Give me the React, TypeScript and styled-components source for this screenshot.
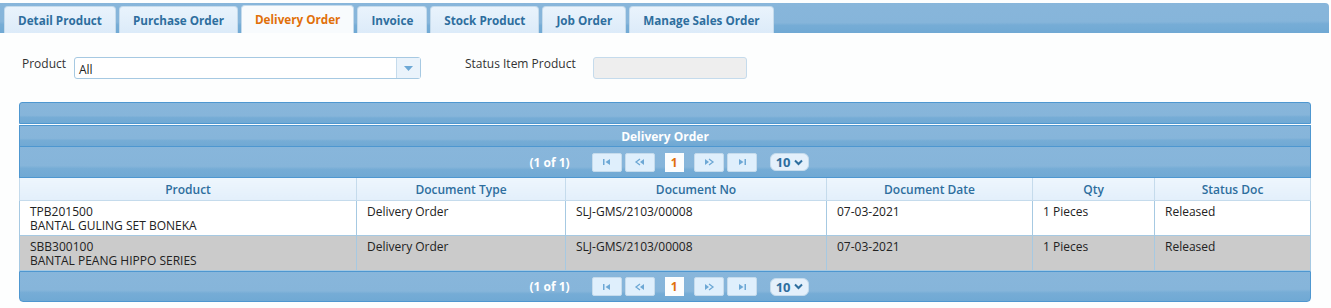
import React from 'react'
import styled, { createGlobalStyle, css } from 'styled-components'

const GlobalStyle = createGlobalStyle`
  body {
    margin: 0;
    background: #fdfefe;
    font-family: 'Open Sans', 'Liberation Sans', sans-serif;
    font-size: 12px;
    color: #333;
  }
`

const wave = css`
  background:
    radial-gradient(140% 75% at 45% 0%, #88b6db 0, #86b5da 88%, rgba(134, 181, 218, 0) 100%),
    linear-gradient(to bottom, #86b5da 0, #70a9d4 100%);
`

const Page = styled.div`
  display: flex;
  flex-direction: column;
  width: 1331px;
`

const TabBar = styled.div`
  ${wave};
  display: flex;
  align-items: flex-end;
  gap: 3px;
  height: 30px;
  margin: 3px 2px 0 0;
  padding: 0 0 0 4px;
  border-radius: 0 4px 0 0;
  box-sizing: border-box;
`

const Tab = styled.div<{ active?: boolean }>`
  height: 27px;
  padding: 0 13px;
  display: flex;
  align-items: center;
  box-sizing: border-box;
  border-radius: 4px 4px 0 0;
  border: 1px solid #c5dbec;
  border-bottom: none;
  font-weight: 700;
  font-size: 11.7px;
  color: ${(p) => (p.active ? '#e17009' : '#2e6e9e')};
  background: ${(p) =>
    p.active ? '#f8fbfd' : 'linear-gradient(to bottom, #e9f3fc 0, #dcebf9 100%)'};
  ${(p) => p.active && 'height: 28px; padding: 0 13px 1px;'}
`

const FilterRow = styled.div`
  display: flex;
  align-items: flex-start;
  padding: 24px 0 0 22px;
  height: 69px;
  box-sizing: border-box;
`

const Label = styled.span<{ width: number }>`
  width: ${(p) => p.width}px;
  line-height: 13px;
  color: #333;
`

const Select = styled.div`
  width: 347px;
  height: 22px;
  box-sizing: border-box;
  border: 1px solid #a6c9e2;
  border-radius: 3px;
  background: #fff;
  display: flex;
  align-items: stretch;
  margin-right: 44px;
`

const SelectText = styled.span`
  flex: 1;
  padding: 3px 4px 0;
  color: #222;
`

const SelectArrow = styled.span`
  width: 23px;
  border-left: 1px solid #c5dbec;
  background: #eaf3fb;
  display: flex;
  align-items: center;
  justify-content: center;
`

const ReadOnlyInput = styled.div`
  width: 154px;
  height: 22px;
  box-sizing: border-box;
  border: 1px solid #c5dbec;
  border-radius: 3px;
  background: #eeeeee;
`

const Panel = styled.div`
  margin: 0 20px 0 19px;
  display: flex;
  flex-direction: column;
`

const HeaderBar = styled.div<{ h: number; top?: boolean; bottom?: boolean; ruled?: boolean }>`
  ${wave};
  height: ${(p) => p.h}px;
  box-sizing: border-box;
  border: 1px solid #4e97d0;
  border-top-width: ${(p) => (p.top || p.bottom || p.ruled ? 1 : 0)}px;
  border-radius: ${(p) => (p.top ? '3px 3px 0 0' : p.bottom ? '0 0 4px 4px' : '0')};
  display: flex;
  align-items: center;
  justify-content: center;
  color: #fff;
  font-weight: 700;
  ${(p) => p.top && 'margin-bottom: 1px;'}
`

const Paginator = styled.div`
  display: flex;
  align-items: center;
  gap: 3px;
  padding-left: 8px;
`

const PageReport = styled.span`
  color: #fff;
  font-weight: 700;
  margin-right: 19px;
`

const PageButton = styled.span`
  width: 30px;
  height: 19px;
  box-sizing: border-box;
  border: 1px solid #c5dbec;
  border-radius: 2px;
  background: #dfeffc;
  display: flex;
  align-items: center;
  justify-content: center;
`

const PageNumber = styled.span`
  width: 19px;
  height: 19px;
  box-sizing: border-box;
  background: #fbfdfe;
  color: #e17009;
  font-weight: 700;
  display: flex;
  align-items: center;
  justify-content: center;
  margin: 0 7px;
`

const RowsSelect = styled.span`
  margin-left: 10px;
  width: 39px;
  height: 18px;
  box-sizing: border-box;
  border: 1px solid #c5dbec;
  border-radius: 6px;
  background: #e4f0fb;
  color: #2e6e9e;
  font-weight: 700;
  font-size: 13px;
  display: flex;
  align-items: center;
  justify-content: center;
  gap: 3px;
`

const Table = styled.table`
  width: 100%;
  border-collapse: collapse;
  table-layout: fixed;
`

const Col = styled.col<{ w?: number }>`
  width: ${(p) => (p.w ? `${p.w}px` : 'auto')};
`

const Th = styled.th`
  height: 22px;
  padding: 0;
  background: linear-gradient(to bottom, #eef6fd 0, #e3effb 100%);
  border: 1px solid #c5dbec;
  border-top: none;
  color: #2e6e9e;
  font-weight: 600;
  font-size: 12px;
  text-align: center;
`

const Tr = styled.tr<{ shaded?: boolean }>`
  background: ${(p) => (p.shaded ? '#cbcbcb' : '#fff')};
`

const Td = styled.td`
  height: 35px;
  box-sizing: border-box;
  padding: 4px 10px 0;
  vertical-align: top;
  border: 1px solid #a6c9e2;
  border-top-color: #c5dbec;
  color: #222;
  line-height: 14px;
  font-size: 12px;
`

const CellLine = styled.div`
  height: 14px;
  line-height: 14px;
`

const ArrowIcon = ({ dir }: { dir: 'first' | 'prev' | 'next' | 'last' }) => {
  const c = '#6da8d5'
  const paths: Record<string, React.ReactNode> = {
    first: (
      <>
        <rect x="2" y="2" width="1.5" height="6" fill={c} />
        <path d="M9 2 L4.5 5 L9 8 Z" fill={c} />
      </>
    ),
    prev: (
      <>
        <path d="M6 2 L2 5 L6 8" stroke={c} strokeWidth="1.3" fill="none" />
        <path d="M10 2 L6 5 L10 8 Z" fill={c} />
      </>
    ),
    next: (
      <>
        <path d="M2 2 L6 5 L2 8 Z" fill={c} />
        <path d="M6 2 L10 5 L6 8" stroke={c} strokeWidth="1.3" fill="none" />
      </>
    ),
    last: (
      <>
        <path d="M3 2 L7.5 5 L3 8 Z" fill={c} />
        <rect x="8.5" y="2" width="1.5" height="6" fill={c} />
      </>
    ),
  }
  return (
    <svg width="12" height="10" viewBox="0 0 12 10">
      {paths[dir]}
    </svg>
  )
}

const PagerBar = ({ bottom }: { bottom?: boolean }) => (
  <HeaderBar h={31} bottom={bottom}>
    <Paginator>
      <PageReport>(1 of 1)</PageReport>
      <PageButton>
        <ArrowIcon dir="first" />
      </PageButton>
      <PageButton>
        <ArrowIcon dir="prev" />
      </PageButton>
      <PageNumber>1</PageNumber>
      <PageButton>
        <ArrowIcon dir="next" />
      </PageButton>
      <PageButton>
        <ArrowIcon dir="last" />
      </PageButton>
      <RowsSelect>
        10
        <svg width="9" height="7" viewBox="0 0 9 7">
          <path d="M1 1.5 L4.5 5 L8 1.5" stroke="#2e6e9e" strokeWidth="2" fill="none" />
        </svg>
      </RowsSelect>
    </Paginator>
  </HeaderBar>
)

const tabs = [
  'Detail Product',
  'Purchase Order',
  'Delivery Order',
  'Invoice',
  'Stock Product',
  'Job Order',
  'Manage Sales Order',
]

const columns = [
  { title: 'Product', w: 337 },
  { title: 'Document Type', w: 209 },
  { title: 'Document No', w: 261 },
  { title: 'Document Date', w: 206 },
  { title: 'Qty', w: 122 },
  { title: 'Status Doc' },
]

const rows = [
  { code: 'TPB201500', name: 'BANTAL GULING SET BONEKA' },
  { code: 'SBB300100', name: 'BANTAL PEANG HIPPO SERIES' },
]

export default function App() {
  return (
    <Page>
      <GlobalStyle />
      <TabBar>
        {tabs.map((t) => (
          <Tab key={t} active={t === 'Delivery Order'}>
            {t}
          </Tab>
        ))}
      </TabBar>
      <FilterRow>
        <Label width={52}>Product</Label>
        <Select>
          <SelectText>All</SelectText>
          <SelectArrow>
            <svg width="9" height="5" viewBox="0 0 9 5">
              <path d="M0 0 L9 0 L4.5 5 Z" fill="#6da8d5" />
            </svg>
          </SelectArrow>
        </Select>
        <Label width={128}>Status Item Product</Label>
        <ReadOnlyInput />
      </FilterRow>
      <Panel>
        <HeaderBar h={22} top />
        <HeaderBar h={22} ruled>
          Delivery Order
        </HeaderBar>
        <PagerBar />
        <Table>
          <colgroup>
            {columns.map((c) => (
              <Col key={c.title} w={c.w} />
            ))}
          </colgroup>
          <thead>
            <tr>
              {columns.map((c) => (
                <Th key={c.title}>{c.title}</Th>
              ))}
            </tr>
          </thead>
          <tbody>
            {rows.map((r, i) => (
              <Tr key={r.code} shaded={i === 1}>
                <Td>
                  <CellLine>{r.code}</CellLine>
                  <CellLine>{r.name}</CellLine>
                </Td>
                <Td>Delivery Order</Td>
                <Td>SLJ-GMS/2103/00008</Td>
                <Td>07-03-2021</Td>
                <Td>1 Pieces</Td>
                <Td>Released</Td>
              </Tr>
            ))}
          </tbody>
        </Table>
        <PagerBar bottom />
      </Panel>
    </Page>
  )
}
